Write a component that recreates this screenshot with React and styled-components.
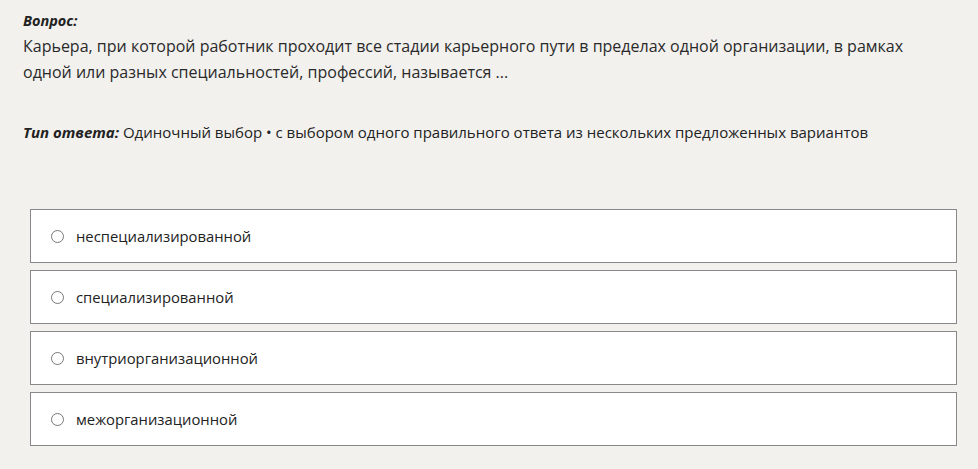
import React from 'react';
import styled, { createGlobalStyle } from 'styled-components';

const GlobalStyle = createGlobalStyle`
  body {
    margin: 0;
    background: #f2f1ee;
    font-family: "Open Sans", "Noto Sans", sans-serif;
    color: #222;
  }
`;

const Page = styled.div`
  padding: 11px 21px 20px 23px;
`;

const Label = styled.div`
  font-weight: 700;
  font-style: italic;
  font-size: 14.5px;
  line-height: 20px;
  margin-bottom: 2px;
`;

const QuestionText = styled.div`
  max-width: 915px;
  font-size: 16px;
  line-height: 26px;
  color: #2a2a2a;
`;

const AnswerType = styled.div`
  margin-top: 36px;
  font-size: 15px;
  line-height: 22px;
  color: #222;
`;

const TypeLabel = styled.span`
  font-weight: 700;
  font-style: italic;
`;

const Options = styled.div`
  margin: 66px 0 0 7px;
  display: flex;
  flex-direction: column;
  gap: 7px;
`;

const Option = styled.label`
  display: flex;
  align-items: center;
  height: 52px;
  padding: 0 20px;
  background: #fff;
  border: 1px solid #888;
  font-size: 14.8px;
  color: #222;
  cursor: pointer;
`;

const Radio = styled.span`
  width: 11px;
  height: 11px;
  border: 1px solid #777;
  border-radius: 50%;
  margin-right: 12px;
  flex-shrink: 0;
`;

const options = [
  'неспециализированной',
  'специализированной',
  'внутриорганизационной',
  'межорганизационной',
];

export default function App() {
  return (
    <>
      <GlobalStyle />
      <Page>
        <Label>Вопрос:</Label>
        <QuestionText>
          Карьера, при которой работник проходит все стадии карьерного пути в пределах одной организации, в рамках одной или разных специальностей, профессий, называется ...
        </QuestionText>
        <AnswerType>
          <TypeLabel>Тип ответа:</TypeLabel> Одиночный выбор • с выбором одного правильного ответа из нескольких предложенных вариантов
        </AnswerType>
        <Options>
          {options.map((o) => (
            <Option key={o}>
              <Radio />
              {o}
            </Option>
          ))}
        </Options>
      </Page>
    </>
  );
}
